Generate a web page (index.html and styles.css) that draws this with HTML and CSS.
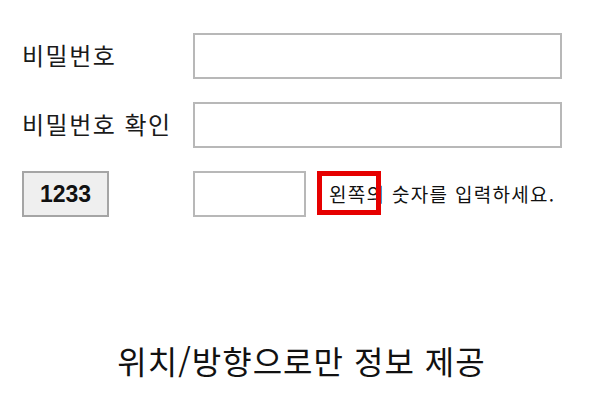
FILE: index.html
```html
<!DOCTYPE html>
<html lang="ko">
<head>
    <meta charset="UTF-8" />
    <meta name="viewport" content="width=device-width, initial-scale=1.0" />
    <title>비밀번호 입력</title>
    <link rel="stylesheet" href="styles.css">
</head>
<body>
    <form class="pw-form">
        <label class="pw-label" for="pwd">비밀번호</label>
        <input id="pwd" class="pw-field" type="password" />

        <label class="pw-label" for="pwd2">비밀번호 확인</label>
        <input id="pwd2" class="pw-field" type="password" />

        <span class="captcha">1233</span>
        <div class="captcha-row">
            <input class="pw-field short" type="text" aria-label="자동입력 방지" />
            <span class="hint">왼쪽의 숫자를 입력하세요.<span class="mark"></span></span>
        </div>
    </form>

    <p class="caption">위치/방향으로만 정보 제공</p>
</body>
</html>
```

FILE: styles.css
```css
*, *::before, *::after {
    box-sizing: border-box;
    margin: 0;
    padding: 0;
}

body {
    background: #FFFFFF;
    font-family: "Noto Sans CJK KR", "Noto Sans", sans-serif;
    color: #111111;
    padding: 33px 0 0 22px;
}

/* 입력 폼 */
.pw-form {
    display: grid;
    grid-template-columns: 171px 369px;
    grid-auto-rows: 46px;
    row-gap: 23px;
    align-items: center;
}

.pw-label {
    font-size: 24px;
    letter-spacing: 1.5px;
    padding-bottom: 3px;
    color: #1a1a1a;
}

.pw-field {
    width: 100%;
    height: 46px;
    border: 2px solid #b8b8b8;
    background: #FFFFFF;
    outline: none;
}

.pw-field.short {
    width: 113px;
    flex-shrink: 0;
}

/* 자동입력 방지 */
.captcha {
    width: 87px;
    height: 46px;
    display: flex;
    align-items: center;
    justify-content: center;
    background: #efefef;
    border: 2px solid #a5a5a5;
    font-family: "Liberation Sans", Arial, sans-serif;
    font-weight: 700;
    font-size: 23px;
    color: #111111;
}

.captcha-row {
    display: flex;
    align-items: center;
    gap: 23px;
    height: 46px;
}

.hint {
    position: relative;
    font-size: 19px;
    letter-spacing: 1.3px;
    white-space: nowrap;
    padding-bottom: 2px;
}

    .hint .mark {
        position: absolute;
        left: -12px;
        top: -9px;
        width: 64px;
        height: 44px;
        border: 5px solid #e60000;
    }

.caption {
    margin-top: 122px;
    margin-left: -22px;
    text-align: center;
    font-size: 32px;
    letter-spacing: 1px;
    line-height: 42px;
    color: #111111;
}
```
